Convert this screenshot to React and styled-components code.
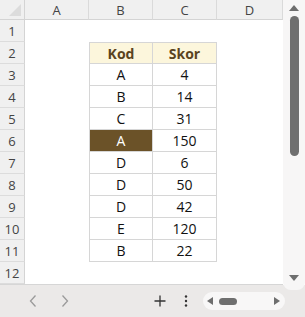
import React from "react";
import styled, { createGlobalStyle } from "styled-components";

const Global = createGlobalStyle`
  html, body { margin: 0; padding: 0; }
  body { width: 305px; height: 317px; overflow: hidden; background: #ebe9e8; font-family: "Open Sans", "Noto Sans", Arial, sans-serif; }
`;

const Frame = styled.div`
  width: 305px;
  height: 317px;
  display: flex;
  flex-direction: column;
`;

const Main = styled.div`
  display: flex;
  height: 285px;
  background: #ffffff;
`;

const Grid = styled.div`
  display: grid;
  grid-template-columns: 25px 64px 64px 64px 66px;
  grid-template-rows: 20px repeat(12, 22px);
  width: 283px;
  height: 284px;
  border-bottom: 1px solid #d6d6d6;
  background: #fff;
`;

const Corner = styled.div`
  background: #f0f0f0;
  border-right: 1px solid #d4d4d4;
  border-bottom: 1px solid #d4d4d4;
  box-sizing: border-box;
  position: relative;
  &::after {
    content: "";
    position: absolute;
    right: 3px;
    bottom: 3px;
    width: 0;
    height: 0;
    border-left: 12px solid transparent;
    border-bottom: 12px solid #dcdcdc;
  }
`;

const ColHead = styled.div`
  background: #f0f0f0;
  border-right: 1px solid #dadada;
  border-bottom: 1px solid #d4d4d4;
  box-sizing: border-box;
  display: flex;
  align-items: center;
  justify-content: center;
  font-size: 13px;
  color: #444;
  padding-top: 1px;
`;

const RowHead = styled.div`
  background: #f0f0f0;
  border-right: 1px solid #d4d4d4;
  border-bottom: 1px solid #dcdcdc;
  box-sizing: border-box;
  display: flex;
  align-items: center;
  justify-content: center;
  font-size: 13px;
  color: #444;
`;

const Cell = styled.div`
  box-sizing: border-box;
  display: flex;
  align-items: center;
  justify-content: center;
  font-size: 14px;
  color: #111;
  background: ${(p) => (p.$bg ? p.$bg : "#fff")};
  ${(p) => p.$dark && "color: #fff;"}
  ${(p) => p.$head && "font-weight: 700; color: #5a4320;"}
  ${(p) =>
    p.$table &&
    `border-right: 1px solid #d6d6d6; border-bottom: 1px solid #d6d6d6;`}
  ${(p) => p.$left && `border-left: 1px solid #d6d6d6;`}
  ${(p) => p.$top && `border-top: 1px solid #d6d6d6;`}
`;

const VScroll = styled.div`
  width: 22px;
  height: 290px;
  background: #f7f6f6;
  border-radius: 0 0 8px 8px;
  position: relative;
  display: flex;
  flex-direction: column;
  align-items: center;
  z-index: 1;
`;

const ArrowUp = styled.div`
  margin-top: 5px;
  width: 0;
  height: 0;
  border-left: 5px solid transparent;
  border-right: 5px solid transparent;
  border-bottom: 6px solid #6e6e6e;
`;

const ArrowDown = styled.div`
  margin-top: auto;
  margin-bottom: 9px;
  width: 0;
  height: 0;
  border-left: 5px solid transparent;
  border-right: 5px solid transparent;
  border-top: 6px solid #6e6e6e;
`;

const VThumb = styled.div`
  margin-top: 5px;
  width: 9px;
  height: 140px;
  border-radius: 5px;
  background: #6f6f6f;
`;

const Bottom = styled.div`
  flex: 1;
  display: flex;
  align-items: center;
  background: #ebe9e8;
  padding-left: 26px;
`;

const NavBtn = styled.div`
  width: 14px;
  display: flex;
  justify-content: center;
  margin-right: 18px;
`;

const ToolBtn = styled.div`
  display: flex;
  justify-content: center;
  align-items: center;
  margin-left: ${(p) => p.$gap}px;
`;

const HScroll = styled.div`
  width: 82px;
  height: 18px;
  margin-left: 15px;
  border-radius: 9px;
  background: #f8f7f7;
  display: flex;
  align-items: center;
  padding: 0 5px 0 4px;
  box-sizing: border-box;
`;

const ArrowLeft = styled.div`
  width: 0;
  height: 0;
  border-top: 4px solid transparent;
  border-bottom: 4px solid transparent;
  border-right: 6px solid #6e6e6e;
`;

const ArrowRight = styled.div`
  margin-left: auto;
  width: 0;
  height: 0;
  border-top: 4px solid transparent;
  border-bottom: 4px solid transparent;
  border-left: 6px solid #6e6e6e;
`;

const HThumb = styled.div`
  margin-left: 6px;
  width: 18px;
  height: 7px;
  border-radius: 4px;
  background: #6f6f6f;
`;

const data = [
  ["A", "4"],
  ["B", "14"],
  ["C", "31"],
  ["A", "150", true],
  ["D", "6"],
  ["D", "50"],
  ["D", "42"],
  ["E", "120"],
  ["B", "22"],
];

export default function App() {
  const cells = [];
  cells.push(<Corner key="corner" />);
  ["A", "B", "C", "D"].forEach((c) => cells.push(<ColHead key={"h" + c}>{c}</ColHead>));
  for (let r = 1; r <= 12; r++) {
    cells.push(<RowHead key={"r" + r}>{r}</RowHead>);
    if (r === 2) {
      cells.push(<Cell key={r + "a"} />);
      cells.push(
        <Cell key={r + "b"} $table $left $top $head $bg="#fcf6dc">
          Kod
        </Cell>
      );
      cells.push(
        <Cell key={r + "c"} $table $top $head $bg="#fcf6dc">
          Skor
        </Cell>
      );
      cells.push(<Cell key={r + "d"} />);
    } else if (r >= 3 && r <= 11) {
      const [k, s, hl] = data[r - 3];
      cells.push(<Cell key={r + "a"} />);
      cells.push(
        <Cell key={r + "b"} $table $left $dark={hl} $bg={hl ? "#6b5228" : undefined}>
          {k}
        </Cell>
      );
      cells.push(
        <Cell key={r + "c"} $table>
          {s}
        </Cell>
      );
      cells.push(<Cell key={r + "d"} />);
    } else {
      for (let i = 0; i < 4; i++) cells.push(<Cell key={r + "x" + i} />);
    }
  }

  return (
    <>
      <Global />
      <Frame>
        <Main>
          <Grid>{cells}</Grid>
          <VScroll>
            <ArrowUp />
            <VThumb />
            <ArrowDown />
          </VScroll>
        </Main>
        <Bottom>
          <NavBtn>
            <svg width="10" height="14" viewBox="0 0 10 14">
              <path d="M7.5 1.5 L2.5 7 L7.5 12.5" fill="none" stroke="#9a9a9a" strokeWidth="1.3" />
            </svg>
          </NavBtn>
          <NavBtn>
            <svg width="10" height="14" viewBox="0 0 10 14">
              <path d="M2.5 1.5 L7.5 7 L2.5 12.5" fill="none" stroke="#9a9a9a" strokeWidth="1.3" />
            </svg>
          </NavBtn>
          <ToolBtn $gap={64}>
            <svg width="12" height="12" viewBox="0 0 12 12">
              <path d="M6 0.5 V11.5 M0.5 6 H11.5" stroke="#333" strokeWidth="1.3" />
            </svg>
          </ToolBtn>
          <ToolBtn $gap={18}>
            <svg width="4" height="12" viewBox="0 0 4 12">
              <circle cx="2" cy="1.5" r="1.2" fill="#333" />
              <circle cx="2" cy="6" r="1.2" fill="#333" />
              <circle cx="2" cy="10.5" r="1.2" fill="#333" />
            </svg>
          </ToolBtn>
          <HScroll>
            <ArrowLeft />
            <HThumb />
            <ArrowRight />
          </HScroll>
        </Bottom>
      </Frame>
    </>
  );
}
